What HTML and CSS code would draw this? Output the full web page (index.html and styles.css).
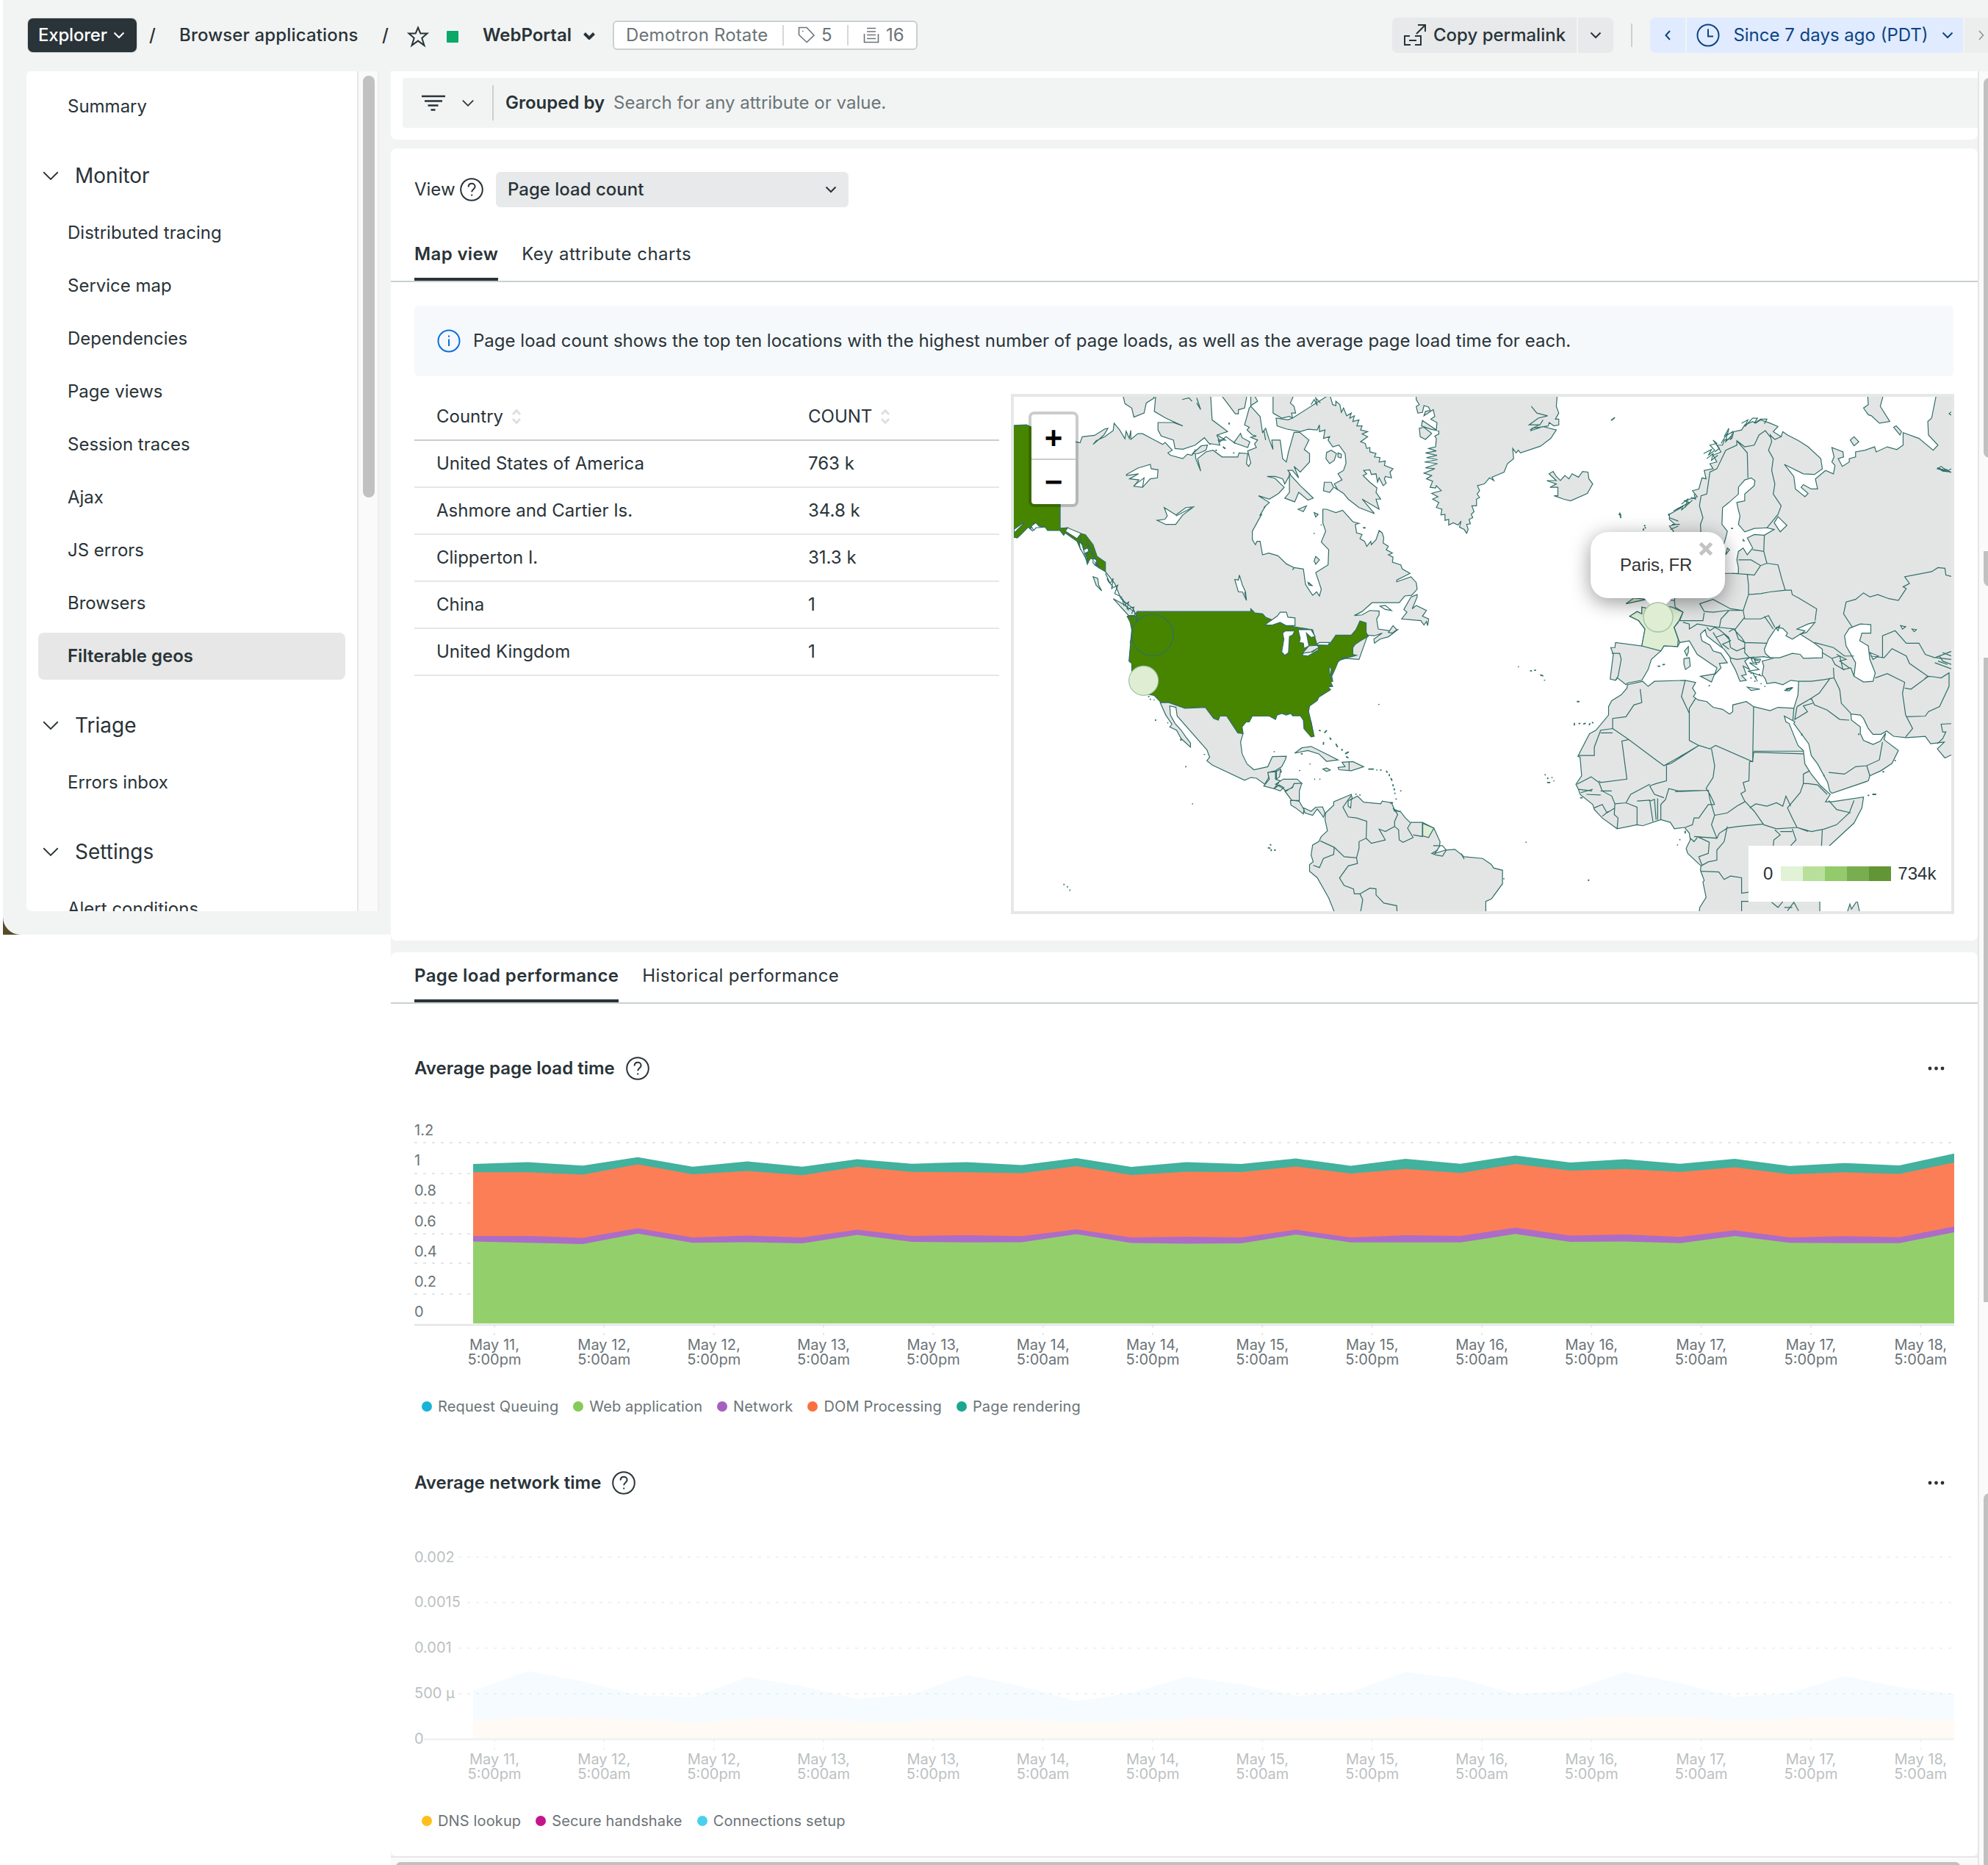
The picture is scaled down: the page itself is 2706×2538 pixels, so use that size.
FILE: index.html
```html
<!DOCTYPE html>
<html lang="en">
<head>
<meta charset="utf-8">
<title>WebPortal - Filterable geos</title>
<link rel="stylesheet" href="styles.css">
</head>
<body>
<svg class="defs" width="0" height="0">
  <symbol id="chev" viewBox="0 0 16 10"><path d="M1.5 1.5 8 8l6.5-6.5"/></symbol>
  <symbol id="help" viewBox="0 0 32 32"><circle cx="16" cy="16" r="14.8"/><path d="M11.6 12.4c0-2.8 1.9-4.6 4.5-4.6s4.5 1.7 4.5 4.1c0 3.6-4.4 3.5-4.4 7.4M16.2 22.4v2.2"/></symbol>
  <symbol id="sort" viewBox="0 0 14 22"><path d="M2 8 7 2.500 12 8M2 14l5 5.500L12 14"/></symbol>
</svg>
<header class="top">
  <button class="explorer">Explorer <svg class="ic" width="16" height="10"><use href="#chev"/></svg></button>
  <span class="slash s1">/</span>
  <span class="crumb">Browser applications</span>
  <span class="slash s2">/</span>
  <svg class="ic star" width="34" height="34" viewBox="0 0 34 34"><path d="M17 6.500 20.300 14.500H29.500L22.300 20.800 25.500 30.800 17 24.600 8.500 30.800 11.700 20.800 4.500 14.500h9.200z"/></svg>
  <span class="status"></span>
  <span class="entity">WebPortal</span>
  <svg class="ic bold caret" width="16" height="10"><use href="#chev"/></svg>
  <div class="tags">
    <span class="tag t1">Demotron Rotate</span>
    <span class="tag t2"><svg class="ic thin" width="23" height="23" viewBox="0 0 23 23"><path d="M1.500 1.500h10.500l10 10.500-9.800 9.500L1.500 11.500zM6 6.500h1.500"/></svg>5</span>
    <span class="tag t3"><svg class="ic thin" width="22" height="22" viewBox="0 0 22 22"><path d="M5 1.500h12M5 6h12M5 10.500h12M1.500 9v11.500h19V9M5 15.500h12"/></svg>16</span>
  </div>
  <div class="right">
    <button class="btn copy"><svg class="ic" width="32" height="32" viewBox="0 0 32 32"><path d="M18 14 29 3M20 2h10v9M9 17H2v12h8M16 17h8v12h-8M8 23h10"/></svg>Copy permalink</button>
    <button class="btn more"><svg class="ic" width="16" height="10"><use href="#chev"/></svg></button>
    <i class="sep"></i>
    <button class="btn blue prev"><svg class="ic" width="10" height="14" viewBox="0 0 10 14"><path d="M8 1 2.500 7 8 13"/></svg></button>
    <button class="btn blue time"><svg class="ic" width="32" height="32" viewBox="0 0 32 32"><circle cx="16" cy="16" r="14.500"/><path d="M16 7.500V17.500h7"/></svg><span>Since 7 days ago (PDT)</span><svg class="ic" width="16" height="10"><use href="#chev"/></svg></button>
    <button class="btn next"><svg class="ic thin" width="10" height="14" viewBox="0 0 10 14"><path d="M2 1 7.500 7 2 13"/></svg></button>
  </div>
</header>
<div class="frame">
<aside class="shell"><div class="shell-in">
  <nav class="side">
    <a class="item">Summary</a>
    <h3><svg class="ic" width="24" height="15"><use href="#chev"/></svg>Monitor</h3>
    <a class="item">Distributed tracing</a>
    <a class="item">Service map</a>
    <a class="item">Dependencies</a>
    <a class="item">Page views</a>
    <a class="item">Session traces</a>
    <a class="item">Ajax</a>
    <a class="item">JS errors</a>
    <a class="item">Browsers</a>
    <a class="item on">Filterable geos</a>
    <h3><svg class="ic" width="24" height="15"><use href="#chev"/></svg>Triage</h3>
    <a class="item">Errors inbox</a>
    <h3><svg class="ic" width="24" height="15"><use href="#chev"/></svg>Settings</h3>
    <a class="item">Alert conditions</a>
  </nav>
  <div class="track"><i></i></div>
</div></aside>
<main>
  <section class="filter">
    <div class="fbar">
      <svg class="ic fi" width="34" height="22" viewBox="0 0 34 22"><path d="M1 2h32M5 8.500h24M9.500 14.500h14M13.500 20.500h6"/></svg>
      <svg class="ic thin" width="18" height="11"><use href="#chev"/></svg>
      <i></i><b>Grouped by</b><span>Search for any attribute or value.</span>
    </div>
  </section>
  <section class="card geo">
    <div class="view"><span>View</span><svg class="ic" width="32" height="32"><use href="#help"/></svg>
      <div class="select">Page load count<svg class="ic" width="16" height="10"><use href="#chev"/></svg></div></div>
    <div class="tabs"><span class="tab on">Map view</span><span class="tab">Key attribute charts</span></div>
    <div class="info"><svg class="ic" width="32" height="32" viewBox="0 0 32 32"><circle cx="16" cy="16" r="14.500"/><path d="M16 13.500v9.500M16 8.500v2.300"/></svg>Page load count shows the top ten locations with the highest number of page loads, as well as the average page load time for each.</div>
    <div class="split">
      <div class="table">
        <div class="row head"><span>Country<svg class="ic" width="14" height="22"><use href="#sort"/></svg></span><span>COUNT<svg class="ic" width="14" height="22"><use href="#sort"/></svg></span></div>
        <div class="row"><span>United States of America</span><span>763 k</span></div>
        <div class="row"><span>Ashmore and Cartier Is.</span><span>34.8 k</span></div>
        <div class="row"><span>Clipperton I.</span><span>31.3 k</span></div>
        <div class="row"><span>China</span><span>1</span></div>
        <div class="row"><span>United Kingdom</span><span>1</span></div>
      </div>
      <div class="map">
        <svg class="world" width="1276" height="700" viewBox="1380 540 1276 700">
          <!-- Americas and Greenland -->
          <g transform="translate(1370 530) scale(.42092 .45918)">
            <path class="land" d="M173 110L200 150 238 158 245 140 285 136 318 117 328 115 315 135 280 163 290 152 318 140 345 122 348 100 366 120 383 146 387 124 397 145 402 121 402 148 425 131 440 131 465 143 505 163 513 157 536 180 522 188 530 195 570 205 585 192 600 195 610 180 612 205 628 242 618 205 645 185 668 180 697 200 748 200 752 188 780 190 776 220 783 228 790 218 780 182 808 172 802 162 812 150 790 142 808 138 795 135 778 120 785 112 770 105 785 55 790 50 820 80 828 128 838 115 850 150 862 178 858 150 885 150 893 205 905 215 912 185 930 127 948 127 978 150 963 178 980 190 980 215 950 245 930 228 945 262 925 240 910 240 918 250 900 280 893 265 870 258 843 258 868 263 898 290 880 308 850 325 815 315 850 335 832 350 838 345 820 372 825 370 795 420 795 445 805 460 810 450 820 450 828 490 848 485 878 493 905 517 930 528 925 535 930 528 960 532 967 578 990 610 1003 600 1012 612 1018 592 1000 543 1040 520 1042 475 1018 452 1032 420 1023 395 1023 355 1035 355 1065 365 1087 358 1120 392 1140 397 1128 400 1132 425 1150 430 1143 442 1158 450 1165 465 1178 450 1180 460 1195 445 1205 418 1215 425 1220 440 1218 455 1235 465 1228 475 1248 485 1235 490 1250 497 1248 512 1275 520 1280 532 1305 545 1262 565 1262 570 1308 555 1325 572 1328 592 1310 610 1288 612 1270 632 1182 632 1150 658 1125 670 1150 668 1175 655 1205 657 1205 668 1197 680 1202 710 1240 715 1265 712 1235 733 1208 740 1190 752 1188 740 1215 722 1190 730 1168 728 1140 800 400 750 420 672 410 650 370 620 350 575 320 540 250 430 198 410 173 412Z"/>
            <path class="land" d="M483 15L478 65 515 85 570 108 540 98 490 98 490 120 500 138 540 150 545 175 570 177 610 165 640 143 655 160 690 165 685 150 708 150 682 135 715 125 665 90 660 15ZM376 15L383 42 405 55 412 82 445 70 452 40 478 25 470 15ZM693 15L740 72 750 72 750 60 770 55 778 15ZM790 15L790 48 812 35 800 15ZM862 15L862 70 890 85 915 80 925 85 922 70 935 70 930 50 918 40 930 15ZM735 158L757 130 762 143 787 155 780 172ZM915 250L915 305 900 322 932 333 945 305 975 328 992 322 950 285ZM943 355L970 345 960 362ZM1035 187L1050 180 1067 190 1060 210 1045 220 1033 205ZM1028 275L1050 275 1058 290 1045 305 1025 300ZM995 365L1008 370 1000 378ZM1072 188L1083 192 1082 203 1072 200ZM602 190L630 167 650 165 645 180 620 190ZM1000 495L1012 505 1000 518 995 508ZM975 572L990 582 978 580Z"/>
            <path class="land" d="M1045 15L1055 45 1065 48 1065 35 1078 45 1083 68 1090 55 1100 78 1115 70 1110 85 1125 78 1120 95 1140 90 1133 108 1150 108 1145 120 1168 125 1150 132 1168 140 1145 155 1160 160 1165 175 1175 172 1175 185 1195 190 1190 200 1208 202 1205 215 1225 212 1222 225 1250 235 1240 245 1245 262 1225 258 1222 265 1228 278 1218 285 1205 262 1200 275 1195 250 1180 252 1175 238 1155 240 1165 250 1153 255 1175 275 1198 292 1195 305 1210 325 1195 325 1205 355 1150 325 1190 368 1140 350 1105 325 1090 308 1060 290 1072 298 1060 280 1085 268 1072 250 1090 240 1098 218 1095 190 1075 165 1055 170 1040 150 1045 140 1025 145 1030 120 1012 125 1012 105 1005 120 975 118 950 125 905 117 875 108 872 85 910 90 925 85Z"/>
            <path class="land" d="M1325 15L1325 30 1335 45 1325 50 1330 70 1345 68 1350 48 1365 52 1370 62 1355 65 1350 78 1380 60 1385 80 1372 88 1392 98 1390 120 1345 92 1342 108 1372 118 1398 123 1398 132 1385 138 1390 145 1388 170 1365 175 1390 182 1355 188 1392 195 1358 202 1394 208 1352 215 1394 220 1355 232 1385 235 1350 248 1375 255 1358 265 1378 272 1370 290 1388 292 1390 285 1406 300 1375 308 1395 318 1378 325 1398 335 1390 350 1408 355 1405 372 1418 370 1418 388 1430 385 1430 402 1445 395 1460 402 1470 390 1465 408 1480 415 1488 426 1493 415 1488 400 1500 398 1496 385 1508 380 1503 370 1512 362 1505 345 1520 345 1520 325 1530 320 1522 310 1530 300 1523 285 1545 280 1562 262 1576 270 1570 260 1609 245 1620 220 1640 205 1637 175 1648 188 1655 180 1662 188 1727 168 1760 145 1778 120 1735 110 1696 122 1700 115 1752 108 1755 98 1770 108 1786 105 1786 88 1775 88 1786 70 1778 50 1781 15ZM1335 115L1350 112 1375 130 1355 148 1338 140Z"/>
            <path class="line" d="M1697 50L1715 70 1750 78 1720 85 1690 105 1725 105 1735 90M568 30L590 25 600 35M615 25L628 60 615 40M985 45L995 30 1005 48 1000 25 1015 40M832 120L838 150M680 135L690 155 710 140 740 160"/>
            <path class="land" d="M1328 608L1308 615 1285 652 1295 660 1278 680 1340 685 1350 698 1358 688 1362 700 1365 680 1345 672 1358 655 1325 640 1312 650 1328 615ZM345 620L370 632 415 660 415 670 395 670 380 655ZM280 555L295 560 298 580 308 597 290 580ZM1235 720L1250 700 1262 712 1248 722Z"/>
            <path class="us" d="M15 107L65 105 82 112 173 115V412L198 410 190 420 228 442 240 428 255 430 280 460 293 495 320 512 320 540 305 532 285 520 290 508 272 500 262 515 255 480 240 475 228 450 190 425 185 432 173 418 133 418 125 408 110 408 95 398 90 410 75 410 85 420 70 408 50 427 35 440 15 437Z"/>
            <path class="us" d="M390 672L420 672 422 658 790 658 790 650 803 662 828 665 838 675 905 700 990 712 1005 758 1045 755 1065 728 1115 728 1130 712 1143 686 1163 692 1163 720 1170 732 1145 745 1128 755 1120 765 1120 785 1132 788 1112 793 1085 796 1072 808 1062 830 1052 850 1055 865 1048 868 1055 880 1040 882 1048 890 1010 912 1005 922 980 938 977 955 985 985 995 1028 985 1030 962 1005 960 980 950 967 925 967 920 960 905 965 890 960 875 965 870 978 850 968 795 968 785 985 775 985 762 1000 765 1020 748 1018 712 968 690 968 685 980 670 975 643 942 577 945 525 928 500 928 478 907 455 903 420 870 405 835 405 812 396 805 405 712 400 690Z"/>
            <path class="sea" d="M24 415L50 398 60 395 50 402 25 425ZM80 405L95 395 105 405 120 408 95 410 88 418ZM235 450L245 460 250 475 262 470 268 480 255 485 265 515 238 470ZM280 500L292 505 290 520 280 515ZM835 698L875 672 885 660 905 660 910 675 933 677 933 700 905 700 885 690 860 698ZM893 722L903 715 932 716 925 728 915 732 912 780 900 788 890 778 897 740ZM943 712L960 712 985 712 998 732 985 735 970 722 978 760 962 768 960 752 947 750 950 738ZM957 788L975 790 1008 772 1010 765 990 778 960 780ZM1001 757L1012 750 1045 750 1040 758ZM388 252L425 233 465 222 468 235 490 238 488 262 465 265 440 290 412 287 428 268 398 265 427 250 388 255ZM487 388L512 385 520 375 510 350 548 372 580 350 605 348 570 372 547 400 515 400ZM738 563L750 565 753 550 763 580 773 600 776 625 763 600 750 600ZM1208 642L1225 640 1245 655 1225 652ZM1043 825L1050 825 1048 858ZM1083 798L1105 795 1080 802Z"/>
            <path class="land" d="M957 782L978 760 1005 758 1010 765 985 778Z"/>
            <path class="line" d="M238 435L262 520M248 455L275 470 280 490 270 480 290 505 300 530 285 510M320 545L335 575 345 560 340 590 360 580 350 605 372 615 380 640 395 630 390 650 412 645 405 665M325 560L330 570 345 585M255 440L270 470 258 490M420 660V690M548 375L575 362 600 350M412 285L445 262 440 290M375 620L395 655M978 572L985 580M770 600L776 625M985 985L990 1010"/>
            <path class="land" d="M497 928L525 928 577 945 643 942 670 975 685 980 690 968 712 968 748 1018 765 1020 757 1045 762 1080 778 1110 800 1127 845 1118 860 1088 905 1087 902 1097 890 1118 870 1130 845 1135 848 1150 835 1170 808 1152 790 1150 770 1158 665 1113 648 1100 657 1090 648 1068 552 968 548 942 528 938 530 965 545 990 565 1010 580 1030 595 1048 595 1060 565 1035 550 1010 528 1000 535 992 515 965ZM832 1175L850 1155 845 1135 870 1133 870 1155 885 1160 865 1183ZM873 1132L887 1125 883 1148 873 1155ZM865 1183L885 1190 897 1180 882 1172ZM870 1170L895 1155 940 1155 955 1167 930 1168 925 1178 905 1190 890 1180ZM900 1190L925 1180 930 1168 955 1167 947 1190 947 1220 922 1217ZM918 1218L945 1218 962 1245 960 1258 935 1240 920 1232ZM960 1240L985 1250 1000 1238 1022 1237 1030 1255 1025 1268 1015 1255 1005 1243 990 1262 965 1255ZM932 1078L955 1062 985 1058 1040 1083 1072 1098 1035 1102 1010 1080 975 1070ZM1072 1120L1095 1118 1085 1105 1120 1103 1155 1118 1115 1130 1075 1127ZM1023 1125L1035 1122 1047 1128 1035 1132Z"/>
            <path class="land" d="M1032 1255L1058 1232 1058 1222 1115 1200 1118 1212 1105 1220 1105 1235 1113 1240 1115 1215 1135 1205 1155 1223 1210 1228 1215 1220 1245 1225 1255 1245 1275 1252 1290 1270 1305 1283 1345 1283 1382 1300 1402 1340 1400 1355 1385 1375 1420 1365 1450 1363 1480 1385 1540 1390 1568 1408 1575 1418 1604 1425 1604 1465 1568 1510 1550 1517 1550 1560 1065 1560 1042 1507 1005 1447 980 1428 980 1408 992 1400 985 1380 990 1350 1010 1340 1018 1325 1038 1308 1030 1275Z"/>
            <path class="line" d="M1108 1103V1130M1115 1203L1088 1238 1105 1267 1132 1270 1165 1280 1163 1330 1140 1340 1140 1360 1132 1388 1092 1385 1060 1357 1015 1338M1060 1357L1058 1378 1025 1390 1012 1417 992 1410M1132 1388L1135 1405 1105 1412 1077 1448 1092 1470 1122 1480 1125 1495 1143 1495 1152 1512 1143 1560M1143 1495L1175 1478 1195 1480 1195 1498 1220 1522 1262 1530 1263 1550M1163 1330L1180 1345 1225 1335 1205 1303 1225 1310 1255 1295 1268 1305 1270 1335 1282 1342 1315 1328 1297 1300 1307 1285M1255 1245L1265 1260 1255 1280 1255 1295M1315 1320L1345 1325V1283M1380 1352L1410 1352 1422 1365 1410 1383 1390 1380 1375 1375 1395 1365M1250 1240L1255 1250 1275 1250M1470 1375L1480 1392"/>
            <path class="pale" d="M1346 1286L1382 1300 1365 1328 1346 1323Z"/>
            <path class="dots" d="M460 908v4M463 918h4M476 920h3M482 978v4M520 988h3M578 1118h4M600 1228h3M640 1080v3M1010 1010l6 2M1028 1018l8 -8M1025 1045v8M1045 1032l5 6M1065 1050l6 10M1085 1065v6M1095 1080l12 -6M1098 1088l8 4M866 1072v3M952 1080h6M980 1110h3M995 1155h3M1012 1155h3M1170 1125h18M1196 1128h3M1208 1128h5M1228 1130l4 6M1238 1140v6M1243 1152l4 8M1250 1170v6M1254 1182v6M1256 1195v4M1275 1188v3M1260 1212v4M1240 1225h10M1130 1198v3M1143 1200v3M1204 932v3M845 1358l8 2M852 1348l4 3M856 1362v6M865 1365h6M186 1465v4M195 1474h4M203 1484h4M564 1035v6M995 425v3M1018 400v3M1153 410h8M888 1130v5M948 1128v3M720 98v6M658 160v4M678 178v5M735 186v4M700 170l8 6"/>
          </g>
          <!-- Europe, Africa and western Asia -->
          <g transform="translate(2030 530) scale(.43112 .45918)">
            <path class="land" d="M562 440L575 420 562 405 580 400 562 385 562 370 600 350 585 355 625 335 610 330 650 318 635 300 655 295 665 262 678 265 672 240 700 235 690 220 712 215 700 195 725 185 712 165 730 165 735 150 760 145 765 125 790 120 800 105 825 95 835 100 850 90 865 95 880 100 905 110 890 125 915 140 920 125 935 135 970 152 1000 170 1040 205 1045 235 1020 252 985 250 925 222 955 258 960 295 990 318 1000 308 978 290 985 282 1010 295 1030 295 1023 265 1055 240 1080 250 1085 225 1075 215 1082 200 1075 172 1110 185 1112 200 1095 205 1108 228 1130 215 1130 205 1150 200 1150 185 1180 180 1210 170 1215 185 1250 170 1280 178 1300 165 1300 128 1350 145 1395 180 1410 165 1380 135 1378 95 1390 85 1405 15 1470 15 1470 1075 1432 1092 1408 1065 1430 1045 1387 1050 1370 1028 1310 1032 1270 1028 1248 1012 1230 1022 1205 1022 1190 1005 1175 975 1165 965 1135 962 1137 980 1165 1000 1165 1020 1175 1040 1205 1052 1228 1042 1245 1018 1240 1038 1285 1070 1265 1108 1230 1130 1195 1145 1190 1160 1075 1197 1068 1190 1062 1165 1030 1110 1010 1085 1002 1050 955 990 958 985 925 968 930 985 940 990 968 1055 985 1070 990 1110 1010 1140 1040 1175 1070 1200 1055 1222 1075 1222 1175 1208 1170 1240 1145 1285 1068 1352 1000 1400 1010 1480 1037 1518 1037 1560 655 1560 658 1535 678 1505 668 1460 672 1455 660 1425 662 1412 620 1375 615 1360 628 1335 625 1315 610 1298 578 1302 565 1283 535 1275 478 1293 460 1290 397 1302 350 1270 325 1245 320 1230 280 1200 275 1185 267 1170 285 1145 280 1090 273 1087 310 1020 330 1010 370 965 370 940 380 922 410 905 428 885 430 875 478 865 495 880 515 865 612 862 645 868 635 885 645 900 638 910 652 920 680 925 700 942 730 948 752 962 762 955 762 935 805 925 828 940 880 952 905 942 955 945 968 905 970 865 945 862 920 875 895 868 870 872 865 858 855 845 860 820 855 805 890 797 860 792 815 795 800 805 815 830 795 820 805 845 790 848 805 862 785 865 770 830 755 805 755 795 735 770 700 745 680 730 675 712 660 725 665 745 690 758 700 775 725 782 745 810 720 812 725 825 705 845 712 825 650 785 625 745 595 750 588 762 545 760 535 775 505 800 495 830 475 862 430 870 425 875 398 855 392 862 375 858 385 785 377 765 390 765 392 750 475 760 485 710 465 685 437 672 460 658 475 665 475 645 500 650 530 620 578 625 590 560 720 545 780 545 780 528 775 505 780 480 795 470 808 490 825 470 808 440 830 430 862 432 893 415 870 410 830 412 800 422 780 400 785 375 778 350 775 335 800 330 800 310 830 285 832 270 820 262 800 268 780 290 780 310 750 335 730 350 728 400 745 420 740 440 720 500 650 520Z"/>
            <path class="land" d="M175 270L205 270 182 250 195 243 205 258 218 270 232 255 245 265 255 250 275 260 288 243 305 245 308 265 320 280 303 308 250 330 228 325 198 315 210 315 210 290 185 290 205 280ZM1188 15L1190 45 1175 55 1190 75 1200 78 1225 100 1258 95 1228 50 1238 15ZM1270 112L1278 108 1295 125 1290 135ZM1133 150L1145 140 1160 155 1145 167ZM608 798L625 795 628 820 613 830 608 815ZM660 850L705 843 695 867ZM808 882L848 888 820 892ZM925 892L952 883 940 893ZM1120 1560L1132 1525 1137 1540 1155 1515 1165 1560ZM740 490L745 470 752 475Z"/>
            <path class="sea" d="M862 770L875 740 900 705 920 708 935 722 930 730 950 740 985 720 990 715 965 710 1000 695 1022 690 995 720 975 725 1020 752 1045 770 1045 795 985 797 975 785 950 782 910 795 880 795 865 782ZM1115 730L1130 708 1165 695 1198 697 1198 722 1170 722 1163 745 1190 760 1195 800 1212 840 1205 865 1175 867 1145 850 1150 810 1120 760ZM893 395L905 377 933 403 912 422ZM1195 780L1222 790 1205 800ZM1408 232L1452 245 1425 242ZM1292 700L1308 703 1298 710ZM1328 710L1342 712 1335 718ZM1460 230L1445 240 1430 235 1420 228 1408 235 1460 248ZM1460 60L1445 72 1460 80ZM820 797L850 800 845 810 825 808ZM900 708L910 700 905 715Z"/>
            <path class="pale" d="M485 710L475 760 535 775 545 760 588 762 590 740 577 705 590 690 605 660 570 645 530 640 500 650 475 645 475 665 460 658 437 672 465 685ZM425 635L450 618 490 622 460 628ZM610 775L622 762 622 778 617 790Z"/>
            <path class="line" d="M662 430L660 400 668 380 657 345 662 315 680 310 690 245 712 235 740 180 775 165 775 152 808 188 810 262M775 152L800 170 830 165 845 135 865 122 880 140M880 132L885 155 875 180 890 205 885 240 895 280 890 310 915 345 905 370 870 410M880 135L895 148 915 140M862 432L860 480 825 475M860 480L870 515 850 522 820 505 780 505M870 515L905 520 918 565 928 595 880 600 850 605 812 608 812 580 808 548M850 522L830 550 808 548 760 545M928 595L947 595 950 608 970 618 1027 650 1022 685M812 608L795 655 755 650 700 622 658 635 672 658 700 660 745 655 795 655M795 655L800 680 850 680 875 670 895 705M862 672L890 710M578 625L580 645 605 660 595 685 640 685 668 685 672 662M590 688L577 705 590 740 595 750M605 690L625 695 625 710 650 695 680 700 720 705 725 680 750 655M720 705L770 710 800 675M680 705L690 715 705 705 720 712 750 735 755 765M708 735L735 725 755 745 730 755 750 770M770 712L780 740 800 750 800 780 815 795M750 718L765 710 790 735 800 750 870 752M755 765L775 775 800 765M752 795L775 800 830 793M700 720L710 735 730 765M1020 750L1080 765 1115 790 1145 790M1045 780L1075 797 1100 790 1110 830 1135 825 1145 850M1075 797L1085 815 1115 832M1090 785L1120 800 1100 805 1130 825M1080 825L1082 855 1050 860 1010 865 970 865M1070 855L1035 900 1010 915 965 940M1082 855L1100 890 1105 930 1135 960M1010 915L1020 935 1060 950 1100 978 1130 980M1015 930L985 938 998 955 958 978 965 940M955 945L952 980M1065 1135L1115 1140 1150 1118 1185 1115 1225 1098 1235 1045M1185 1115L1195 1145M1212 855L1250 842 1305 868 1298 900 1308 965 1330 1005 1308 1030M1305 885L1325 888 1380 850 1400 852 1420 855 1445 840 1445 880 1415 940 1380 955 1370 968 1310 970M1198 790L1240 795 1265 768 1310 790 1320 812 1378 850 1368 857M1235 795V730L1275 715 1310 752 1350 752 1370 785 1400 795 1470 770M1405 795L1452 800M1400 810L1452 828M1425 780L1452 790M1410 805L1440 815M1140 705L1112 665 1120 630 1150 622 1175 603 1195 615 1220 608 1255 620 1285 625 1310 590 1300 585 1320 575 1305 555 1390 540 1410 528 1432 530 1435 550 1470 558M1460 990L1420 992 1425 1015 1435 1015 1425 1035 1408 1050M380 782L405 782 410 800 400 850 392 862"/>
            <path class="line" d="M470 888L475 928 450 935 425 970 383 975 383 1005M383 1005L345 1010 325 1060 325 1085 275 1085M345 1018L383 1018M383 1005L430 1035 520 1098 545 1115 620 1075 655 1055 625 1040 625 960 600 910 612 862M625 960L625 945 645 915M655 1055L568 1108 545 1115M432 1038L412 1042 428 1155 345 1165 340 1160M655 1055L690 1065 708 1055 825 1103 828 940M815 1103L825 1103 828 1075 985 1080M828 1072H985M695 1065L705 1115 700 1150 678 1182 690 1200 705 1230M815 1103L813 1160 795 1165 802 1190 788 1198 800 1220 830 1250 860 1290M553 1115L553 1160 520 1168 500 1175 515 1200 545 1210M425 1225L440 1200 500 1170M390 1228L425 1225 460 1238V1290M460 1220L500 1217 510 1280M500 1220L515 1215 520 1275M525 1212L525 1275M535 1275V1230L550 1215 560 1183 590 1190 680 1188M580 1192L685 1188 690 1215M705 1230L685 1230 655 1270 640 1270 635 1290 612 1298M690 1215L705 1262 695 1290 712 1330 640 1325M705 1262L745 1255 775 1235 800 1222M712 1330L720 1315 745 1300 780 1295 860 1288M745 1295L735 1340 712 1365 712 1395 685 1400 662 1412M985 1168L975 1195 935 1240 950 1270 965 1298 1010 1310 1050 1303 1090 1290 1130 1255 1145 1218M1065 1218L1090 1245 1135 1255M985 1168L1000 1168 1030 1172 1060 1200M985 1168L985 1140 1005 1130M815 1240L835 1228 870 1235 900 1225 920 1235 930 1205 945 1235M860 1290L900 1302 965 1298 1000 1310M1045 1303L1042 1360M895 1305L912 1320 892 1335 890 1352M950 1302L962 1335 945 1352M912 1310H950M650 1325L688 1342 685 1375 655 1385 665 1410M628 1330L640 1340 650 1328M662 1428L718 1430 735 1452 755 1442 790 1447 790 1493 812 1490M790 1560V1517H812M270 1170L315 1148 340 1165 350 1190 380 1205 390 1228 388 1260 400 1270 397 1302M275 1185L318 1190M282 1195L320 1185M300 1200L345 1202M325 1240L350 1230 365 1255 390 1240M350 1265L370 1250M345 1190L380 1190"/>
            <path class="line" d="M670 190L695 178 685 195 705 180 690 165 712 160 700 150 720 175 705 185M735 140L750 115 745 135 762 125 755 150M790 100L810 90 800 110 825 85 840 85 830 100 850 88 870 88 862 102M600 340L620 325 612 350M630 320L645 325 640 310M122 120L150 105M795 450V445L800 450M570 400H595M565 415L590 405M845 805L830 800 838 815 815 810 845 830 810 835 855 850 825 840 840 865M1415 790L1425 805 1452 815M885 1520L905 1535 920 1518M935 1545L955 1520 970 1545M800 1560M925 1535H950M680 205L700 190 695 210 715 195M725 160L745 130 740 155 760 135M562 380L590 390M575 360L605 345 600 358 635 328"/>
            <path class="dots" d="M378 92l12 -9M402 370l8 2M405 365l4 16M482 405l4 -3M480 412v6M486 408v4M757 412h6M84 822h3M122 834h6M135 832h6M154 846l10 3M168 860v3M270 925h8M262 988v8M275 990h6M290 992l8 -3M308 995l4 -6M318 986l4 3M168 1142h4M178 1150v5M190 1150h3M196 1160h3M176 1165h10M108 1342h3M307 1452v5M38 1450h3M586 1350h3M595 1333v3M525 820h8M540 816l8 -1M688 876v4M820 840v3M835 850v5M845 845h4M830 865h4M850 872h3M862 880h3M818 855h4M930 888l20 -4M1188 1203h5M1203 1200h12M1235 1133h5M1050 1142v4M1275 1098v4M612 1308v8M980 1020v6M560 368v6M280 1210h8M1160 1020v4"/>
          </g>
          <circle class="ring" cx="1568.700" cy="864.300" r="28.300"/>
          <circle class="spot" cx="1556.600" cy="926.300" r="20"/>
        </svg>
        <div class="zoom"><span>+</span><span>−</span></div>
        <div class="popup"><i class="tip"></i><div class="bubble">Paris, FR<svg width="20" height="20" viewBox="0 0 20 20"><path d="M2.500 2.500l15 15M17.500 2.500l-15 15"/></svg></div></div>
        <svg class="paris" width="42" height="42" viewBox="0 0 42 42"><circle class="spot" cx="21" cy="21" r="20"/></svg>
        <div class="scale">0<i class="c1"></i><i class="c2"></i><i class="c3"></i><i class="c4"></i><i class="c5"></i>734k</div>
      </div>
    </div>
  </section>
  <section class="card perf">
    <div class="tabs"><span class="tab on">Page load performance</span><span class="tab">Historical performance</span></div>
    <div class="title t-a"><b>Average page load time</b><svg class="ic" width="32" height="32"><use href="#help"/></svg><svg class="menu" width="24" height="6"><circle cx="3" cy="3" r="2.400"/><circle cx="11.500" cy="3" r="2.400"/><circle cx="20" cy="3" r="2.400"/></svg></div>
    <svg class="chart" width="2096" height="360" viewBox="564 1510 2096 360">
      <path class="grid" d="M564 1555H2660M564 1597H2660M564 1637H2660M564 1679H2660M564 1719H2660M564 1761H2660"/>
      <path fill="#42b19e" d="M644 1584.100L718.700 1581.400 793.300 1586.300 868 1574.700 942.700 1587.700 1017.300 1580.500 1092 1587.700 1166.700 1577.400 1241.300 1583.700 1316 1581.400 1390.700 1585.400 1465.300 1576 1540 1588 1614.700 1581.500 1689.300 1584 1764 1576.500 1838.700 1586.500 1913.300 1577 1988 1583.700 2062.700 1572.500 2137.300 1581.900 2212 1577.400 2286.700 1583.700 2361.300 1577 2436 1586.800 2510.700 1582.800 2585.300 1585.900 2660 1569.800V1801H644Z"/>
      <path fill="#fc7e56" d="M644 1595.300L718.700 1595.300 793.300 1598.400 868 1584.600 942.700 1598 1017.300 1593.500 1092 1599.300 1166.700 1587.700 1241.300 1594.800 1316 1595.300 1390.700 1596.600 1465.300 1587 1540 1599 1614.700 1594.500 1689.300 1595 1764 1587.500 1838.700 1597 1913.300 1590.800 1988 1596.200 2062.700 1584.100 2137.300 1593 2212 1590.800 2286.700 1594.800 2361.300 1588.600 2436 1598 2510.700 1595.300 2585.300 1597.500 2660 1581.900V1801H644Z"/>
      <path fill="#ad6cc7" d="M644 1681.900L718.700 1681.900 793.300 1684.600 868 1671.600 942.700 1684.100 1017.300 1681.400 1092 1684.100 1166.700 1673.400 1241.300 1681.900 1316 1681 1390.700 1682.300 1465.300 1673 1540 1684 1614.700 1683 1689.300 1684 1764 1673.400 1838.700 1684 1913.300 1681 1988 1681.900 2062.700 1670.700 2137.300 1681.400 2212 1680 2286.700 1683.200 2361.300 1674.300 2436 1684.100 2510.700 1682.300 2585.300 1683.700 2660 1668.900V1801H644Z"/>
      <path fill="#93d06c" d="M644 1689.500L718.700 1691.300 793.300 1693 868 1678.800 942.700 1691.300 1017.300 1690.400 1092 1692.100 1166.700 1680.500 1241.300 1689.900 1316 1690.800 1390.700 1690.400 1465.300 1679.500 1540 1691.500 1614.700 1692.500 1689.300 1692 1764 1680 1838.700 1690.800 1913.300 1690.800 1988 1690.800 2062.700 1679.200 2137.300 1689.900 2212 1689.500 2286.700 1691.700 2361.300 1681.900 2436 1691.300 2510.700 1691.700 2585.300 1691.700 2660 1677V1801H644Z"/>
      <path class="axis" d="M564 1803H2660"/>
      <path class="ticks" d="M564 1805H2660M564 1815.500H2660"/>
      <g class="yl"><text x="564" y="1545">1.2</text><text x="564" y="1586">1</text><text x="564" y="1627">0.8</text><text x="564" y="1669">0.6</text><text x="564" y="1710">0.4</text><text x="564" y="1751">0.2</text><text x="564" y="1792">0</text></g>
      <g class="xl" id="xl">
        <text y="1837"><tspan x="673">May 11,</tspan><tspan x="822.300">May 12,</tspan><tspan x="971.700">May 12,</tspan><tspan x="1121">May 13,</tspan><tspan x="1270.300">May 13,</tspan><tspan x="1419.700">May 14,</tspan><tspan x="1569">May 14,</tspan><tspan x="1718.300">May 15,</tspan><tspan x="1867.700">May 15,</tspan><tspan x="2017">May 16,</tspan><tspan x="2166.300">May 16,</tspan><tspan x="2315.700">May 17,</tspan><tspan x="2465">May 17,</tspan><tspan x="2614.300">May 18,</tspan></text>
        <text y="1857"><tspan x="673">5:00pm</tspan><tspan x="822.300">5:00am</tspan><tspan x="971.700">5:00pm</tspan><tspan x="1121">5:00am</tspan><tspan x="1270.300">5:00pm</tspan><tspan x="1419.700">5:00am</tspan><tspan x="1569">5:00pm</tspan><tspan x="1718.300">5:00am</tspan><tspan x="1867.700">5:00pm</tspan><tspan x="2017">5:00am</tspan><tspan x="2166.300">5:00pm</tspan><tspan x="2315.700">5:00am</tspan><tspan x="2465">5:00pm</tspan><tspan x="2614.300">5:00am</tspan></text>
      </g>
    </svg>
    <div class="legend"><span class="k-rq">Request Queuing</span><span class="k-web">Web application</span><span class="k-net">Network</span><span class="k-dom">DOM Processing</span><span class="k-pr">Page rendering</span></div>
    <div class="title t-b"><b>Average network time</b><svg class="ic" width="32" height="32"><use href="#help"/></svg><svg class="menu" width="24" height="6"><circle cx="3" cy="3" r="2.400"/><circle cx="11.500" cy="3" r="2.400"/><circle cx="20" cy="3" r="2.400"/></svg></div>
    <svg class="chart faded" width="2096" height="360" viewBox="564 2074 2096 360">
      <path fill="#f5fbfe" d="M644 2301L718.700 2274 793.300 2288 868 2307 942.700 2309.800 1017.300 2282.500 1092 2294.700 1166.700 2311.700 1241.300 2306.500 1316 2278.900 1390.700 2295 1465.300 2315 1540 2304 1614.700 2282 1689.300 2292 1764 2308 1838.700 2303 1913.300 2275.200 1988 2284.400 2062.700 2305.400 2137.300 2301 2212 2275.500 2286.700 2290.600 2361.300 2309.500 2436 2303.900 2510.700 2281 2585.300 2295.800 2660 2305.400V2366H644Z"/>
      <path fill="#fffaf3" d="M644 2341L718.700 2337.500 793.300 2338.600 868 2339.700 942.700 2344 1017.300 2339 1092 2339.300 1166.700 2342.300 1241.300 2342.300 1316 2339 1390.700 2341 1465.300 2343 1540 2342 1614.700 2339 1689.300 2339 1764 2342 1838.700 2341 1913.300 2338.200 1988 2339.700 2062.700 2340.800 2137.300 2339.700 2212 2334.500 2286.700 2336.700 2361.300 2341.500 2436 2339.300 2510.700 2336.400 2585.300 2339 2660 2340.400V2366H644Z"/>
      <path class="grid" d="M624 2119H2660M636 2181H2660M624 2243H2660M624 2305H2660"/>
      <path class="axis" d="M577 2367H2660"/>
      <path class="ticks" d="M564 2369H2660M564 2379.500H2660"/>
      <g class="yl"><text x="564" y="2126">0.002</text><text x="564" y="2187">0.0015</text><text x="564" y="2249">0.001</text><text x="564" y="2311">500 µ</text><text x="564" y="2373">0</text></g>
      <use href="#xl" y="564"/>
    </svg>
    <div class="legend"><span class="k-dns">DNS lookup</span><span class="k-ssl">Secure handshake</span><span class="k-con">Connections setup</span></div>
  </section>
  <div class="hscroll"><i></i></div>
</main>
<div class="vscroll"><i class="v1"></i><i class="v2"></i><i class="v3"></i><i class="v4"></i></div>
</div>
</body>
</html>
```
FILE: styles.css
```css
* { box-sizing: border-box; }
body {
  margin: 0;
  width: 2706px;
  height: 2538px;
  overflow: hidden;
  background: #fff;
  font: 24px/32px Inter, "Liberation Sans", sans-serif;
  color: #293338;
  white-space: nowrap;
}
svg { display: block; flex: none; }
.defs { position: absolute; }
button { font: inherit; color: inherit; border: 0; padding: 0; }
.ic { fill: none; stroke: currentColor; stroke-width: 2; }
.ic.thin { stroke-width: 1.6; }
.ic.bold { stroke-width: 4; }

.top { display: flex; align-items: center; height: 97px; padding-left: 34px; margin-left: 4px; background: #f2f4f3; overflow: hidden; }
.top > * { flex: none; margin-bottom: 2px; }
.explorer { display: flex; align-items: center; gap: 8px; width: 148px; height: 46px; padding-left: 14px; border-radius: 7px; background: #293338; color: #fff; font-weight: 500; box-shadow: 0 0 0 1px #d5d9da; letter-spacing: -.2px; }
.slash { width: 58px; padding-left: 17px; font-weight: 500; }
.crumb { width: 247px; font-weight: 500; letter-spacing: .16px; }
.s2 { width: 60px; padding-left: 29px; }
.star { margin-left: 1px; }
.status { width: 16px; height: 16px; margin-left: 22px; margin-top: 4px; background: #0ba86a; border-radius: 1px; }
.entity { width: 128px; margin-left: 33px; font-weight: 600; }
.caret { margin-left: 9px; margin-top: 3px; }
.tags { display: flex; align-items: center; width: 415px; height: 40px; margin-left: 24px; border: 2px solid #c9d0d2; border-radius: 6px; background: #fff; color: #6b7478; }
.tag { display: flex; align-items: center; gap: 9px; height: 28px; }
.t1 { width: 229px; padding-left: 16px; letter-spacing: .15px; }
.t2, .t3 { border-left: 2px solid #d3d9da; padding-left: 19px; }
.t2 { width: 88px; }
.t3 { padding-left: 20px; }
.right { display: flex; margin-left: auto; gap: 2px; align-items: center; width: 811px; }
.right > * { flex: none; }
.btn { display: flex; align-items: center; height: 48px; background: #e7e9ea; justify-content: center; }
.copy { width: 251px; gap: 9px; border-radius: 7px 0 0 7px; font-weight: 500; }
.more { width: 48px; border-radius: 0 7px 7px 0; }
.sep { width: 2px; height: 32px; margin: 0 22px; background: #c9d0d2; }
.blue { background: #e0ebff; color: #0c4384; }
.prev { width: 48px; border-radius: 7px 0 0 7px; }
.time { width: 376px; gap: 18px; }
.btn.next { width: 50px; background: #ebeeed; color: #8e9699; justify-content: flex-start; padding-left: 18px; }

.frame { display: flex; height: 2441px; }
.shell { width: 528px; height: 1175px; margin-left: 4px; background: #574b28; flex: none; }
.shell-in { display: flex; height: 1175px; padding: 0 0 32px 32px; border-radius: 0 0 0 24px; background: #f2f4f3; }
.side { width: 450px; height: 1143px; overflow: hidden; background: #fff; border-radius: 6px 0 0 8px; padding: 16px 16px 0; }
.item { display: block; height: 64px; line-height: 64px; margin-bottom: 8px; padding-left: 40px; border-radius: 8px; }
.item.on { background: #e7e7e7; font-weight: 600; }
.side h3 { display: flex; align-items: center; gap: 21px; margin: 30px 0 14px; padding-left: 5px; height: 64px; font-size: 28px; font-weight: 400; }
.side h3 .ic { stroke-width: 1.200; }
.track { width: 30px; background: #fafafa; border-left: 2px solid #e5e7e7; border-right: 2px solid #ececec; padding: 6px 0 0 6px; }
.track i { display: block; width: 16px; height: 574px; border-radius: 8px; background: #c1c1c1; }

main { width: 2160px; flex: none; background: #f2f4f3; }
.filter { height: 93px; padding: 9px 0 0 16px; background: #fff; border-radius: 0 0 8px 8px; }
.fbar { display: flex; align-items: center; height: 68px; padding-left: 25px; background: #f2f4f3; border-radius: 4px 0 0 4px; }
.fbar .fi { stroke-width: 2.400; margin-right: 21px; }
.fbar i { width: 2px; height: 48px; margin: 0 16px 0 24px; background: #c9d0d2; }
.fbar b { font-weight: 600; width: 147px; }
.fbar span { color: #6b7478; }
.card { background: #fff; border-radius: 8px; margin-top: 12px; }
.geo { height: 1078px; padding-top: 32px; }
.view { display: flex; align-items: center; height: 48px; padding-left: 32px; }
.view > span { width: 62px; }
.select { display: flex; align-items: center; justify-content: space-between; width: 480px; height: 48px; margin-left: 17px; padding: 0 16px; border-radius: 6px; background: #e7e9ea; font-weight: 500; }
.tabs { display: flex; gap: 32px; padding-left: 32px; border-bottom: 2px solid #c9d0d2; }
.geo .tabs { height: 66px; margin-top: 36px; }
.tab { height: 64px; line-height: 56px; letter-spacing: .36px; }
.geo .tab:last-child { letter-spacing: .5px; }
.tab.on { font-weight: 600; border-bottom: 4px solid #293338; }
.info { display: flex; align-items: center; gap: 17px; height: 96px; margin: 32px 33px 0 32px; padding-left: 31px; background: #f5f9fc; border-radius: 6px; letter-spacing: .015px; }
.info .ic { color: #0c6fe0; }
.split { display: flex; gap: 16px; margin: 24px 0 0 32px; }
.table { width: 796px; padding-top: 1px; }
.row { display: grid; grid-template-columns: 506px 1fr; align-items: center; height: 64px; padding-left: 30px; border-bottom: 2px solid #e5e7e7; }
.row.head { height: 63px; padding-bottom: 2px; border-color: #c9cdce; }
.head span { display: flex; align-items: center; gap: 11px; }
.head .ic { color: #dcdfe0; stroke-width: 2.800; }
.map { position: relative; width: 1284px; height: 708px; border: 4px solid #e6e8e8; overflow: hidden; font-family: "Liberation Sans", sans-serif; }
.world path, .world circle { vector-effect: non-scaling-stroke; stroke: #2f6f69; stroke-width: 1.2; }
.land { fill: #e3e5e4; }
.us { fill: #478500; }
.sea { fill: #fff; }
.pale { fill: #dfeed3; }
.line { fill: none; }
.world .dots { fill: none; stroke-width: 1.800; }
.ring { fill: none; }
.spot { fill: #dfeed3; stroke: #9fc3a5; stroke-width: 1.400; }
.world .spot { stroke: #9fc3a5; }
.zoom { position: absolute; left: 20px; top: 20px; width: 68px; height: 130px; border: 4px solid rgba(0, 0, 0, .2); border-radius: 8px; background: #fff; background-clip: padding-box; }
.zoom span { display: block; height: 61px; line-height: 60px; text-align: center; font-weight: 700; font-size: 42px; color: #000; }
.zoom span:first-child { border-bottom: 2px solid #ccc; height: 62px; line-height: 63px; }
.popup { position: absolute; left: 785px; top: 184px; width: 183px; height: 116px; }
.bubble { position: absolute; inset: 0 0 26px; border-radius: 24px; background: #fff; box-shadow: 0 6px 28px rgba(0, 0, 0, .4); line-height: 90px; padding-left: 40px; color: #333; letter-spacing: -.2px; }
.bubble svg { position: absolute; right: 16px; top: 13px; fill: none; stroke: #c3c3c3; stroke-width: 5; }
.tip { position: absolute; left: 75px; top: 68px; width: 34px; height: 34px; background: #fff; transform: rotate(45deg); z-index: 1; }
.paris { position: absolute; left: 856px; top: 279px; z-index: 2; }
.scale { position: absolute; right: 0; bottom: 13px; display: flex; align-items: center; width: 276px; height: 76px; padding-left: 20px; background: #fff; }
.scale i { width: 30px; height: 20px; }
.c1 { background: #e1f2d6; margin-left: 11px; }
.c2 { background: #b9e09b; }
.c3 { background: #93ca6c; }
.c4 { background: #78ae50; }
.scale .c5 { background: #629536; margin-right: 9px; }

.perf { height: 1230px; margin-top: 16px; }
.perf .tabs { height: 70px; }
.perf .tab { height: 68px; line-height: 63px; }
.title { display: flex; align-items: center; gap: 15px; height: 32px; margin: 72px 44px 0 32px; }
.title b { font-weight: 600; }
.menu { margin-left: auto; fill: #293338; }
.chart { margin: 40px 0 0 32px; overflow: visible; }
.grid { stroke: #e3e6e6; stroke-width: 2; stroke-dasharray: 4 8; }
.axis { stroke: #e3e6e6; stroke-width: 2.500; }
.ticks { stroke: #e3e6e6; stroke-width: 3; stroke-dasharray: 0 108 2 39.330; }
.yl, .xl { font-size: 20px; fill: #6b7478; }
.xl text { text-anchor: middle; }
.faded .yl, .faded use { opacity: .45; }
.faded .grid, .faded .axis, .faded .ticks { opacity: .5; }
.legend { display: flex; height: 32px; gap: 20px; margin: 28px 0 0 42px; font-size: 20px; color: #6b7478; letter-spacing: .14px; }
.legend span { display: flex; align-items: center; gap: 8px; }
.legend span::before { content: ""; width: 14px; height: 14px; border-radius: 50%; background: currentColor; }
.k-rq::before { color: #18b4d8; } .k-web::before { color: #84cb57; } .k-net::before { color: #a55fc2; }
.k-dom::before { color: #f9703f; } .k-pr::before { color: #1da68e; } .k-dns::before { color: #fdbf1b; }
.k-ssl::before { color: #c4158a; } .k-con::before { color: #4ad0ee; }
.hscroll { height: 12px; padding: 6px 0 0 7px; background: #fafafa; border-top: 2px solid #e5e7e7; }
.hscroll i { display: block; width: 2129px; height: 12px; border-radius: 6px; background: #c1c1c1; }
.vscroll { flex: none; width: 14px; padding: 9px 0 0 6px; border-left: 2px solid #e5e7e7; background: #fafafa; }
.vscroll i { display: block; width: 16px; background: #c1c1c1; }
.v1 { height: 517px; border-radius: 8px 0 0 8px; }
.v2 { height: 48px; margin-top: 127px; border-radius: 0 0 0 8px; }
.v3 { height: 877px; margin-top: 97px; }
.v4 { height: 506px; margin-top: 260px; border-radius: 8px 0 0 0; }
```
